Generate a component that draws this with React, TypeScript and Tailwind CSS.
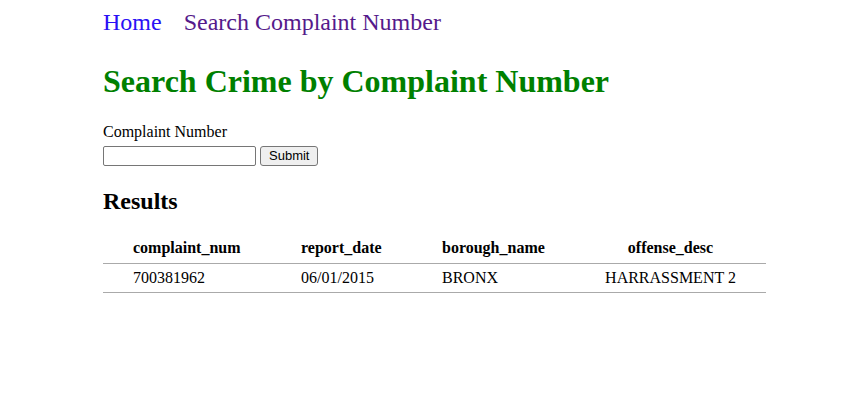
export default function App() {
  const rows = [
    { num: "700381962", date: "06/01/2015", borough: "BRONX", offense: "HARRASSMENT 2" },
  ];

  return (
    <div className="min-h-[405px] bg-white font-['Liberation_Serif',serif] text-black">
      <div className="ml-[103px] w-[663px] pt-[8px]">
        {/* nav */}
        <nav className="flex gap-[22px] text-[24px] leading-[28px]">
          <a href="#" className="text-[#2a10f5]">Home</a>
          <a href="#" className="text-[#551a8b]">Search Complaint Number</a>
        </nav>

        <h1 className="mt-[27px] text-[32px] font-bold leading-[37px] text-[#008000]">
          Search Crime by Complaint Number
        </h1>

        <form className="mt-[23px] flex flex-col" onSubmit={(e) => e.preventDefault()}>
          <label className="text-[16px] leading-[18px]">Complaint Number</label>
          <div className="mt-[5px] flex items-center gap-[4px]">
            <input
              type="text"
              className="h-[20px] w-[153px] rounded-[2px] border border-[#767676] bg-white px-[2px] text-[13px]"
            />
            <button
              type="submit"
              className="h-[20px] rounded-[3px] border border-[#767676] bg-[#efefef] px-[8px] font-['Liberation_Sans',sans-serif] text-[13px] leading-[18px]"
            >
              Submit
            </button>
          </div>
        </form>

        <h2 className="mt-[21px] text-[24px] font-bold leading-[28px]">Results</h2>

        <table className="mt-[19px] w-[663px] border-collapse text-[16px]">
          <thead>
            <tr className="h-[29px] border-b border-[#aaaaaa]">
              <th className="w-[168px] pl-[30px] text-left font-bold">complaint_num</th>
              <th className="w-[141px] pl-[30px] text-left font-bold">report_date</th>
              <th className="w-[163px] pl-[30px] text-left font-bold">borough_name</th>
              <th className="text-center font-bold">offense_desc</th>
            </tr>
          </thead>
          <tbody>
            {rows.map((r) => (
              <tr key={r.num} className="h-[29px] border-b border-[#aaaaaa]">
                <td className="pl-[30px]">{r.num}</td>
                <td className="pl-[30px]">{r.date}</td>
                <td className="pl-[30px]">{r.borough}</td>
                <td className="text-center">{r.offense}</td>
              </tr>
            ))}
          </tbody>
        </table>
      </div>
    </div>
  );
}
